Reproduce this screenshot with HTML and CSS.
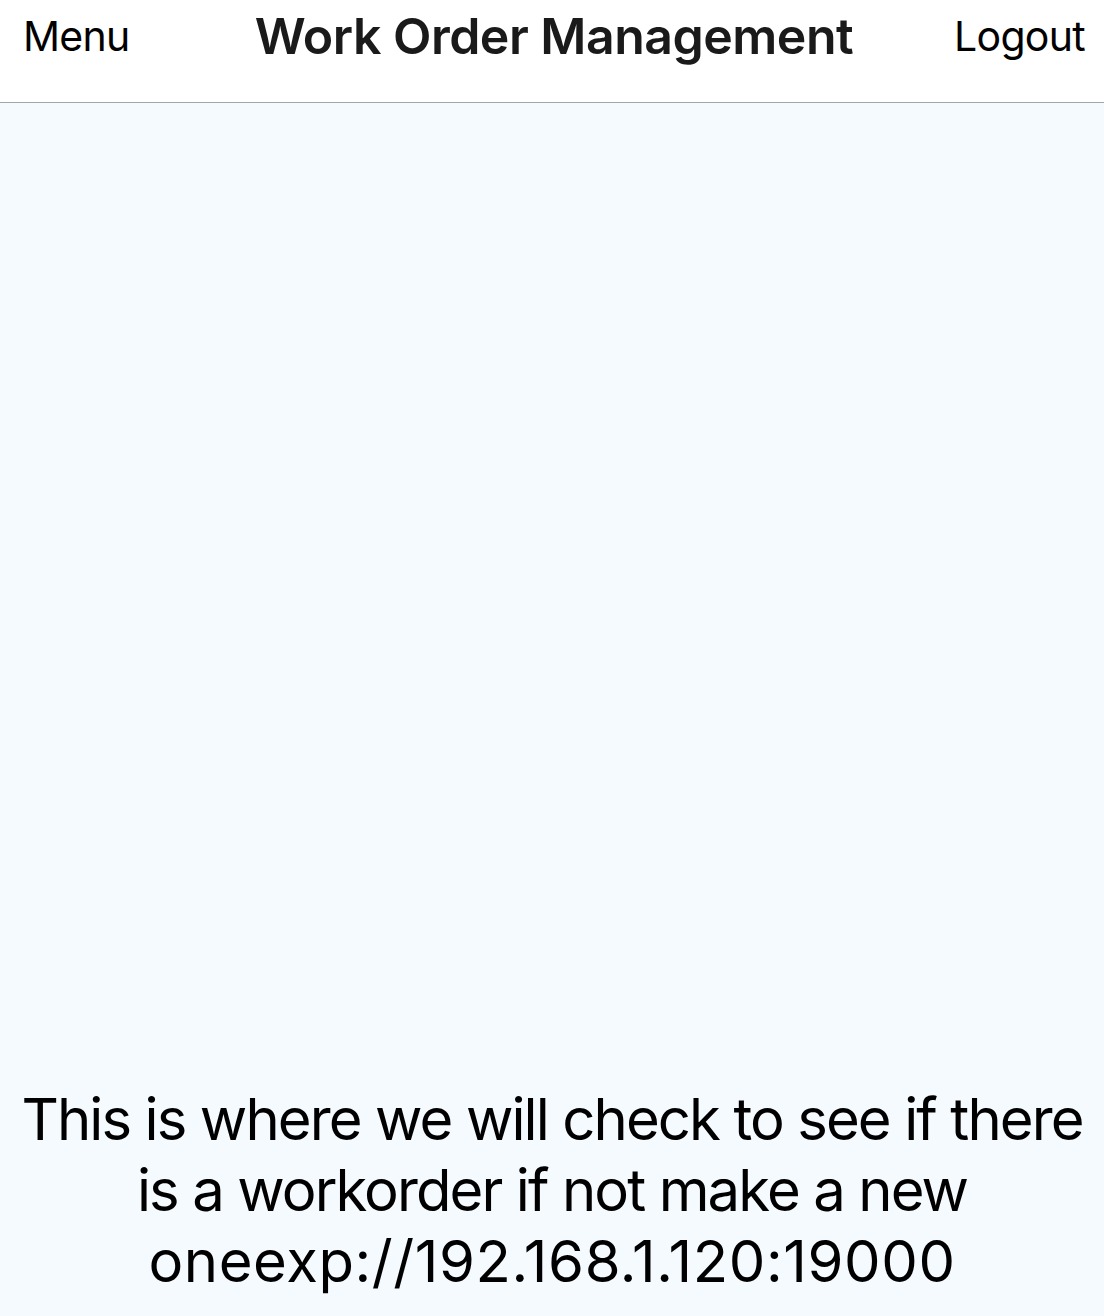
FILE: index.html
```html
<!DOCTYPE html>
<html>
<head>
<meta charset="utf-8">
<link rel="stylesheet" href="styles.css">
</head>
<body>
<div class="app">
  <header class="nav">
    <span class="nav-btn nav-left">Menu</span>
    <span class="nav-title">Work Order Management</span>
    <span class="nav-btn nav-right">Logout</span>
  </header>
  <main class="content">
    <p class="message"><span class="line">This is where we will check to see if there</span><span class="line">is a workorder if not make a new</span><span class="line line-url">oneexp://192.168.1.120:19000</span></p>
  </main>
</div>
</body>
</html>
```
FILE: styles.css
```css
html, body {
  margin: 0;
  padding: 0;
}
body {
  font-family: Inter, "Noto Sans", "Liberation Sans", sans-serif;
  color: #000;
  background: #f5faff;
}
.app {
  display: flex;
  flex-direction: column;
  height: 1316px;
  overflow: hidden;
}
.nav {
  display: grid;
  grid-template-columns: 1fr auto 1fr;
  align-items: center;
  height: 103px;
  padding: 0 19px 30px 23px;
  box-sizing: border-box;
  background: #fff;
  border-bottom: 1px solid #a6a6aa;
  flex: 0 0 auto;
}
.nav-left {
  justify-self: start;
}
.nav-right {
  justify-self: end;
}
.nav-btn {
  font-size: 41px;
  letter-spacing: -0.7px;
}
.nav-title {
  font-size: 50px;
  font-weight: 600;
  color: #1a1a1a;
  letter-spacing: -0.5px;
}
.content {
  flex: 1;
  display: flex;
  flex-direction: column;
  justify-content: flex-end;
  background: #f5faff;
}
.message {
  margin: 0 0 19px;
  padding: 0;
  text-align: center;
  white-space: nowrap;
  font-size: 58px;
  line-height: 71px;
}
.line {
  display: block;
  letter-spacing: -1.9px;
}
.line-url {
  letter-spacing: 0.6px;
}
```
